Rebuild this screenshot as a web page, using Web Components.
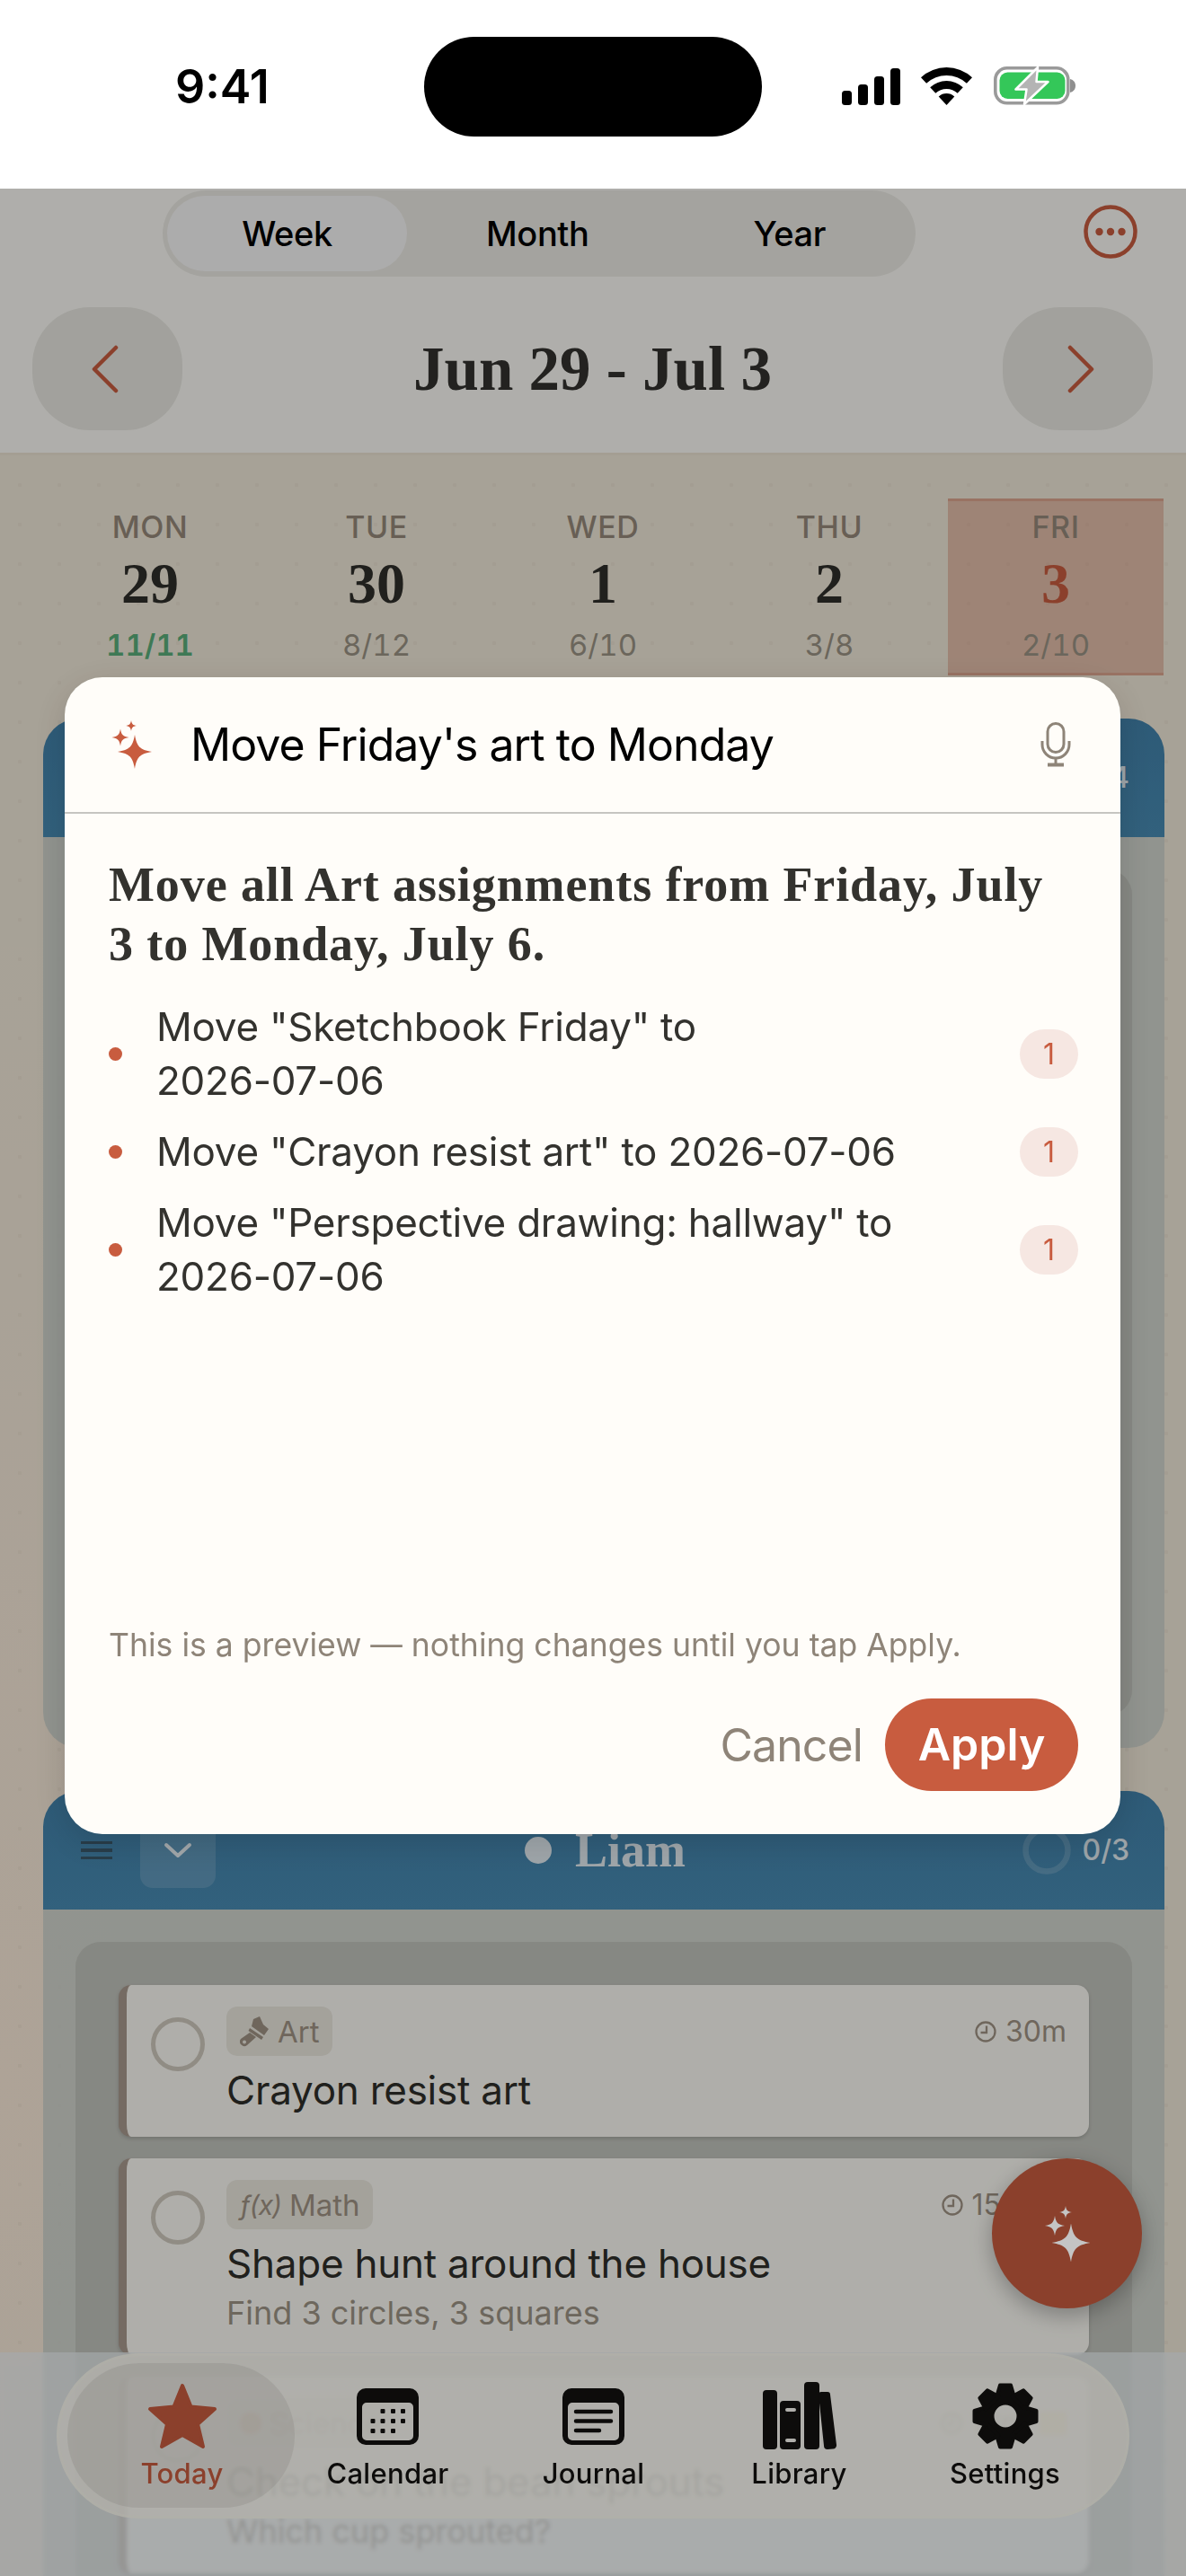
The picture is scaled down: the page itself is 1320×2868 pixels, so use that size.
<!DOCTYPE html>
<html lang="en">
<head>
<meta charset="utf-8">
<title>Week plan</title>
<style>
  html, body { margin: 0; padding: 0; background: #fff; }
  body { width: 1320px; height: 2868px; overflow: hidden; font-family: Inter, "Liberation Sans", sans-serif; }
  .nb { white-space: nowrap; }
  .fx { font-size: 30px; line-height: 40px; font-style: italic; letter-spacing: -1px; }
  .blob { display: block; width: 24px; height: 24px; border-radius: 50%; background: #e08a5a; }
</style>
</head>
<body>
<status-bar></status-bar>
<app-screen>
  <top-header></top-header>
  <week-strip>
    <day-col name="MON" date="29" done="11/11" complete></day-col>
    <day-col name="TUE" date="30" done="8/12"></day-col>
    <day-col name="WED" date="1" done="6/10"></day-col>
    <day-col name="THU" date="2" done="3/8"></day-col>
    <day-col name="FRI" date="3" done="2/10" today></day-col>
  </week-strip>
  <student-card count="4" body-height="1014"></student-card>
  <student-card name="Liam" count="0/3" body-height="800" show-head>
    <task-card category="Art" time="30m" title="Crayon resist art"><art-icon slot="icon"></art-icon></task-card>
    <task-card category="Math" time="15m" title="Shape hunt around the house" note="Find 3 circles, 3 squares" flag><span slot="icon" class="fx">ƒ(x)</span></task-card>
    <task-card category="Science" time="10m" title="Check on the bean sprouts" note="Which cup sprouted?" flag><span slot="icon" class="blob"></span></task-card>
  </student-card>
  <fab-button></fab-button>
  <tab-bar>
    <tab-item label="Today" icon="star" active></tab-item>
    <tab-item label="Calendar" icon="calendar"></tab-item>
    <tab-item label="Journal" icon="journal"></tab-item>
    <tab-item label="Library" icon="library"></tab-item>
    <tab-item label="Settings" icon="gear"></tab-item>
  </tab-bar>
  <dim-overlay></dim-overlay>
  <ai-dialog query="Move Friday's art to Monday" summary="Move all Art assignments from Friday, July 3 to Monday, July 6.">
    <plan-row>Move "Sketchbook Friday" to <span class="nb">2026-07-06</span></plan-row>
    <plan-row>Move "Crayon resist art" to <span class="nb">2026-07-06</span></plan-row>
    <plan-row>Move "Perspective drawing: hallway" to <span class="nb">2026-07-06</span></plan-row>
  </ai-dialog>
</app-screen>

<script>
const SERIF = '"Liberation Serif", serif'
const STAR = 'M0 -1C.12 -.3 .3 -.12 1 0C.3 .12 .12 .3 0 1C-.12 .3 -.3 .12 -1 0C-.3 -.12 -.12 -.3 0 -1Z'

function sparkles(color, big, small, tiny) {
    return `<g fill="${color}">
      <path d="${STAR}" transform="translate(${big[0]} ${big[1]}) scale(${big[2]})"/>
      <path d="${STAR}" transform="translate(${small[0]} ${small[1]}) scale(${small[2]})"/>
      <path d="${STAR}" transform="translate(${tiny[0]} ${tiny[1]}) scale(${tiny[2]})"/>
    </g>`
}

class StatusBar extends HTMLElement {
    constructor() {
        super()
        this.attachShadow({ mode: 'open' })
    }
    connectedCallback() {
        this.shadowRoot.innerHTML = `
      <style>
        :host { display: flex; height: 210px; background: #fff; color: #000; position: relative; }
        .time { width: 277px; margin-left: 195px; padding-top: 67px; font: 600 52px/60px Inter, sans-serif; }
        .island { width: 376px; height: 111px; margin-top: 41px; border-radius: 56px; background: #000; }
        .icons { display: flex; margin: 75px 0 0 89px; height: 42px; align-items: flex-end; }
        .bars { display: flex; gap: 7px; align-items: flex-end; height: 41px; }
        .bars i { display: block; width: 11px; background: #000; border-radius: 3.5px; }
        .wifi { margin-left: 23px; }
        .batt { margin-left: 24px; margin-bottom: -1px; }
      </style>
      <div class="time">9:41</div>
      <div class="island"></div>
      <div class="icons">
        <div class="bars"><i style="height:16px"></i><i style="height:23px"></i><i style="height:32px"></i><i style="height:41px"></i></div>
        <svg class="wifi" width="57" height="42" viewBox="0 0 57 42">
          <path d="M0 11.2A42 42 0 0 1 57 11.2L50.9 17.8A33 33 0 0 0 6.1 17.8Z"/>
          <path d="M10.2 22.2A27 27 0 0 1 46.8 22.2L40.7 28.8A18 18 0 0 0 16.3 28.8Z"/>
          <path d="M28.5 42L19.7 32.5A13 13 0 0 1 37.3 32.5Z"/>
        </svg>
        <svg class="batt" width="92" height="44" viewBox="0 0 92 44">
          <rect x="1.8" y="1.8" width="81" height="39" rx="13" fill="none" stroke="#9a9a9a" stroke-width="3.6"/>
          <path d="M85 14c4 1 6 4 6 7.5s-2 6.5-6 7.5z" fill="#8f8f8f"/>
          <rect x="6.5" y="6.5" width="73" height="29.5" rx="9" fill="#34c759"/>
          <path d="M49 1L24.5 25.5H36.5L34 42L60.5 17H47.5Z" fill="#b4b4b4" stroke="#fff" stroke-width="2.5" stroke-linejoin="round"/>
        </svg>
      </div>`
    }
}

class AppScreen extends HTMLElement {
    constructor() {
        super()
        this.attachShadow({ mode: 'open' })
    }
    connectedCallback() {
        this.shadowRoot.innerHTML = `
      <style>
        :host {
          display: block; position: relative; height: 2658px; overflow: hidden;
          background-color: #f0e8d8;
          background-image:
            radial-gradient(rgba(120,100,80,.05) 2px, transparent 2.5px),
            radial-gradient(700px 1300px at 0 2100px, #f9ead9, rgba(249,234,217,0));
          background-size: 44px 44px, 100% 100%;
        }
      </style>
      <slot></slot>`
    }
}

class TopHeader extends HTMLElement {
    constructor() {
        super()
        this.attachShadow({ mode: 'open' })
    }
    connectedCallback() {
        this.shadowRoot.innerHTML = `
      <style>
        :host { display: block; background: #fbfaf5; border-bottom: 3px solid #ebe3d3; padding: 2px 37px 25px 36px; }
        .top { display: flex; align-items: flex-start; height: 96px; padding-left: 145px; }
        .seg { width: 838px; height: 96px; box-sizing: border-box; padding: 6px 5px; border-radius: 48px; background: #ebeae4; display: grid; grid-template-columns: 267px 1fr 1fr; color: #000; font: 500 38px/84px Inter, sans-serif; letter-spacing: -.4px; text-align: center; }
        .seg .on { background: #f7f6f6; border-radius: 42px; }
        .seg span:nth-child(n+2) { padding-left: 10px; }
        .more { margin: 16px 0 0 187px; }
        .nav { display: flex; justify-content: space-between; align-items: center; margin-top: 34px; height: 137px; }
        button { width: 167px; height: 137px; border: 0; padding: 0; border-radius: 64px; background: #e8e7e1; display: flex; align-items: center; justify-content: center; }
        .prev svg { margin-right: 6px; }
        .next svg { margin-left: 6px; }
        h1 { margin: 0; font: 700 69px/80px ${SERIF}; color: #33322e; }
      </style>
      <div class="top">
        <div class="seg"><span class="on">Week</span><span>Month</span><span>Year</span></div>
        <svg class="more" width="60" height="60" viewBox="0 0 60 60">
          <circle cx="30" cy="30" r="27.5" fill="none" stroke="#c85c3f" stroke-width="4.5"/>
          <circle cx="17.5" cy="30" r="4.2" fill="#c85c3f"/><circle cx="30" cy="30" r="4.2" fill="#c85c3f"/><circle cx="42.5" cy="30" r="4.2" fill="#c85c3f"/>
        </svg>
      </div>
      <div class="nav">
        <button class="prev" aria-label="Previous"><svg width="32" height="54" viewBox="0 0 32 54"><path d="M28 3L4 27L28 51" fill="none" stroke="#c85c3f" stroke-width="4.5" stroke-linecap="round" stroke-linejoin="round"/></svg></button>
        <h1>Jun 29 - Jul 3</h1>
        <button class="next" aria-label="Next"><svg width="32" height="54" viewBox="0 0 32 54"><path d="M4 3L28 27L4 51" fill="none" stroke="#c85c3f" stroke-width="4.5" stroke-linecap="round" stroke-linejoin="round"/></svg></button>
      </div>`
    }
}

class WeekStrip extends HTMLElement {
    constructor() {
        super()
        this.attachShadow({ mode: 'open' })
    }
    connectedCallback() {
        this.shadowRoot.innerHTML = `
      <style>
        :host { display: grid; grid-template-columns: repeat(5, 240px); gap: 12px; padding: 48px 0 48px 47px; }
      </style>
      <slot></slot>`
    }
}

class DayCol extends HTMLElement {
    constructor() {
        super()
        this.attachShadow({ mode: 'open' })
    }
    connectedCallback() {
        this.shadowRoot.innerHTML = `
      <style>
        :host { display: flex; flex-direction: column; align-items: center; height: 197px; box-sizing: border-box; border: solid transparent; border-width: 3px 0; padding-top: 9px; text-align: center; }
        :host([today]) { background: rgba(200,92,63,.3); border-color: rgba(200,92,63,.25); }
        .name { font: 500 34px/40px Inter, sans-serif; letter-spacing: .6px; color: #95897a; }
        .date { margin-top: 8px; font: 700 64px/70px ${SERIF}; color: #2f2e2a; }
        :host([today]) .date { color: #c85c3f; }
        .done { margin-top: 13px; font: 400 33px/40px Inter, sans-serif; font-variant-numeric: tabular-nums; color: #9a9384; }
        :host([complete]) .done { color: #5aae7a; font-weight: 600; }
      </style>
      <div class="name">${this.getAttribute('name')}</div>
      <div class="date">${this.getAttribute('date')}</div>
      <div class="done">${this.getAttribute('done')}</div>`
    }
}

class StudentCard extends HTMLElement {
    constructor() {
        super()
        this.attachShadow({ mode: 'open' })
    }
    connectedCallback() {
        const showHead = this.hasAttribute('show-head')
        this.shadowRoot.innerHTML = `
      <style>
        :host { display: block; margin: 0 24px 48px 48px; border-radius: 40px; overflow: hidden; background: rgba(203,208,203,.88); }
        .head { height: 132px; display: flex; align-items: center; background: linear-gradient(#4282ab, #488bb3); color: rgba(255,255,255,.86); padding: 0 39px 0 42px; }
        .side { flex: 1; display: flex; align-items: center; }
        .side.end { justify-content: flex-end; gap: 12px; font: 500 32px/40px Inter, sans-serif; }
        .handle { display: grid; gap: 5px; width: 35px; margin-right: 31px; }
        .handle i { display: block; height: 3.5px; background: rgba(50,50,50,.55); }
        .toggle { width: 84px; height: 84px; border-radius: 14px; background: rgba(255,255,255,.14); display: flex; align-items: center; justify-content: center; }
        .who { display: flex; align-items: center; gap: 26px; font: 700 54px/60px ${SERIF}; }
        .who i { display: block; width: 30px; height: 30px; border-radius: 50%; background: currentColor; }
        .body { padding: 36px; height: ${this.getAttribute('body-height')}px; box-sizing: border-box; }
        .panel { height: 100%; box-sizing: border-box; padding: 48px; border-radius: 28px; background: rgba(190,192,184,.85); display: flex; flex-direction: column; gap: 24px; }
        :host([show-head]) .panel { height: 1200px; }
      </style>
      <div class="head">
        <div class="side">${showHead ? `
          <div class="handle"><i></i><i></i><i></i></div>
          <div class="toggle"><svg width="32" height="18" viewBox="0 0 32 18"><path d="M3 3L16 15L29 3" fill="none" stroke="currentColor" stroke-width="4" stroke-linecap="round" stroke-linejoin="round"/></svg></div>` : ''}
        </div>
        ${showHead ? `<div class="who"><i></i>${this.getAttribute('name')}</div>` : ''}
        <div class="side end">
          ${showHead ? `<svg width="54" height="54" viewBox="0 0 54 54"><circle cx="27" cy="27" r="23.5" fill="none" stroke="rgba(255,255,255,.16)" stroke-width="6.5"/></svg>` : ''}
          <span>${this.getAttribute('count')}</span>
        </div>
      </div>
      <div class="body"><div class="panel"><slot></slot></div></div>`
    }
}

class TaskCard extends HTMLElement {
    constructor() {
        super()
        this.attachShadow({ mode: 'open' })
    }
    connectedCallback() {
        const note = this.getAttribute('note')
        this.shadowRoot.innerHTML = `
      <style>
        :host { display: flex; box-sizing: border-box; background: #fbfaf4; border-left: 9px solid #a89a8e; border-radius: 14px; box-shadow: 0 2px 4px rgba(0,0,0,.16); padding: 24px 25px 24px 27px; }
        .check { flex: none; width: 60px; height: 60px; box-sizing: border-box; border-radius: 50%; border: 5px solid #cfc9be; margin: 12px 24px 0 0; }
        .main { flex: 1; min-width: 0; }
        .meta { display: flex; justify-content: space-between; align-items: center; height: 55px; }
        .chip { display: flex; align-items: center; gap: 9px; height: 55px; padding: 0 14px 0 15px; border-radius: 12px; background: #ebe8df; color: #9f9384; font: 400 33px/40px Inter, sans-serif; }
        .time { display: flex; align-items: center; gap: 10px; color: #9f9384; font: 400 32px/40px Inter, sans-serif; }
        .flag { width: 30px; height: 26px; margin-left: 5px; border-radius: 3px; background: #f6d98c; }
        .title { margin-top: 10px; font: 400 44px/56px Inter, sans-serif; letter-spacing: -.25px; color: #2f2e2a; }
        .note { margin-top: 4px; font: 400 36px/46px Inter, sans-serif; color: #9d9486; }
      </style>
      <div class="check"></div>
      <div class="main">
        <div class="meta">
          <div class="chip"><slot name="icon"></slot><span>${this.getAttribute('category')}</span></div>
          <div class="time">
            <svg width="24" height="26" viewBox="0 0 24 26" fill="none" stroke="currentColor" stroke-width="2.3"><circle cx="12" cy="13" r="10.5"/><path d="M13 6.5V14H6.5"/></svg>
            <span>${this.getAttribute('time')}</span>
            ${this.hasAttribute('flag') ? '<div class="flag"></div>' : ''}
          </div>
        </div>
        <div class="title">${this.getAttribute('title')}</div>
        ${note ? `<div class="note">${note}</div>` : ''}
      </div>`
    }
}

class ArtIcon extends HTMLElement {
    constructor() {
        super()
        this.attachShadow({ mode: 'open' })
    }
    connectedCallback() {
        this.shadowRoot.innerHTML = `
      <style>:host { display: block; width: 33px; height: 34px; }</style>
      <svg width="33" height="34" viewBox="0 0 33 34" fill="#9f9384">
        <path d="M15 3L22 0L26 9L32 14L27 21L13 11Z"/>
        <path d="M11 13L26 23L24 26L9.5 16Z"/>
        <path fill-rule="evenodd" d="M11 18L18 23L8 32A5 5 0 0 1 1 25ZM5 26.5A2 2 0 1 0 5 30.5A2 2 0 1 0 5 26.5Z"/>
      </svg>`
    }
}

class FabButton extends HTMLElement {
    constructor() {
        super()
        this.attachShadow({ mode: 'open' })
    }
    connectedCallback() {
        // the glyph sits above the dim layer, it reads lighter than the dimmed button
        this.shadowRoot.innerHTML = `
      <style>
        :host { position: absolute; left: 1104px; top: 2193px; width: 167px; height: 167px; border-radius: 50%; background: #c85c3f; box-shadow: 0 8px 24px rgba(0,0,0,.28); }
        svg { position: relative; z-index: 2; display: block; }
      </style>
      <svg width="167" height="167" viewBox="0 0 167 167">${sparkles('#c4c4c4', [88, 94, 21.5], [70, 75, 11], [82, 60, 7])}</svg>`
    }
}

class TabBar extends HTMLElement {
    constructor() {
        super()
        this.attachShadow({ mode: 'open' })
    }
    connectedCallback() {
        this.shadowRoot.innerHTML = `
      <style>
        :host { position: absolute; left: 0; right: 0; bottom: 0; height: 249px; background: rgba(238,243,246,.68); -webkit-backdrop-filter: blur(2px); backdrop-filter: blur(2px); }
        .pill { position: absolute; left: 63px; top: 1px; width: 1194px; height: 184px; box-sizing: border-box; border-radius: 92px; background: rgba(255,252,244,.78); border: 3px solid rgba(255,253,240,.35); padding: 27px 0 0 22px; display: grid; grid-template-columns: repeat(5, 229px); align-items: start; }
      </style>
      <div class="pill"><slot></slot></div>`
    }
}

const TAB_ICONS = {
    star: `<svg width="78" height="74" viewBox="0 0 78 74"><path d="M39 3L48.5 26.5L75 29L56 46L62 71L39 58L16 71L22 46L3 29L29.5 26.5Z" fill="#c85c3f" stroke="#c85c3f" stroke-width="4" stroke-linejoin="round"/></svg>`,
    calendar: `<svg width="69" height="63" viewBox="0 0 69 63"><path fill="#131210" fill-rule="evenodd" d="M10 0H59A10 10 0 0 1 69 10V53A10 10 0 0 1 59 63H10A10 10 0 0 1 0 53V10A10 10 0 0 1 10 0ZM11 16A5 5 0 0 0 6 21V53A5 5 0 0 0 11 58H58A5 5 0 0 0 63 53V21A5 5 0 0 0 58 16Z"/><g fill="#131210"><rect x="26.5" y="23" width="5" height="5" rx="1"/><rect x="38" y="23" width="5" height="5" rx="1"/><rect x="49" y="23" width="5" height="5" rx="1"/><rect x="15.5" y="34" width="5" height="5" rx="1"/><rect x="26.5" y="34" width="5" height="5" rx="1"/><rect x="38" y="34" width="5" height="5" rx="1"/><rect x="49" y="34" width="5" height="5" rx="1"/><rect x="15.5" y="45" width="5" height="5" rx="1"/><rect x="26.5" y="45" width="5" height="5" rx="1"/><rect x="38" y="45" width="5" height="5" rx="1"/></g></svg>`,
    journal: `<svg width="69" height="63" viewBox="0 0 69 63"><path fill="#131210" fill-rule="evenodd" d="M10 0H59A10 10 0 0 1 69 10V53A10 10 0 0 1 59 63H10A10 10 0 0 1 0 53V10A10 10 0 0 1 10 0ZM11 16A5 5 0 0 0 6 21V53A5 5 0 0 0 11 58H58A5 5 0 0 0 63 53V21A5 5 0 0 0 58 16Z"/><path d="M15 26H54M15 36.5H54M15 47H41" stroke="#131210" stroke-width="4.5" stroke-linecap="round"/></svg>`,
    library: `<svg width="82" height="76" viewBox="0 0 82 76"><g fill="#131210"><rect x="0" y="9" width="16" height="66" rx="4"/><path fill-rule="evenodd" d="M23 21H38A4 4 0 0 1 42 25V71A4 4 0 0 1 38 75H23A4 4 0 0 1 19 71V25A4 4 0 0 1 23 21ZM27 29A2 2 0 0 0 27 33H35A2 2 0 0 0 35 29ZM27 63A2 2 0 0 0 27 67H35A2 2 0 0 0 35 63Z"/><rect x="46" y="0" width="17" height="75" rx="4"/><path d="M62 14A3 3 0 0 1 65 11H72A3 3 0 0 1 75 14L82 70A4 4 0 0 1 78 74.5L72 75A4 4 0 0 1 68 71Z"/></g></svg>`,
    gear: `<svg width="74" height="74" viewBox="-37 -37 74 74"><circle r="19" fill="none" stroke="#131210" stroke-width="13"/><g fill="#131210" stroke="#131210" stroke-width="4" stroke-linejoin="round"><path d="M-6 -34.5H6L10 -21H-10Z"/><path d="M-6 -34.5H6L10 -21H-10Z" transform="rotate(45)"/><path d="M-6 -34.5H6L10 -21H-10Z" transform="rotate(90)"/><path d="M-6 -34.5H6L10 -21H-10Z" transform="rotate(135)"/><path d="M-6 -34.5H6L10 -21H-10Z" transform="rotate(180)"/><path d="M-6 -34.5H6L10 -21H-10Z" transform="rotate(225)"/><path d="M-6 -34.5H6L10 -21H-10Z" transform="rotate(270)"/><path d="M-6 -34.5H6L10 -21H-10Z" transform="rotate(315)"/></g></svg>`
}

class TabItem extends HTMLElement {
    constructor() {
        super()
        this.attachShadow({ mode: 'open' })
    }
    connectedCallback() {
        this.shadowRoot.innerHTML = `
      <style>
        :host { display: flex; flex-direction: column; align-items: center; position: relative; color: #131210; }
        :host([active]) { color: #c85c3f; }
        :host([active])::before { content: ""; position: absolute; left: -13px; top: -19px; width: 253px; height: 161px; border-radius: 80px; background: rgba(120,115,105,.13); }
        .icon { position: relative; height: 80px; display: flex; align-items: center; justify-content: center; }
        .label { position: relative; margin-top: 4px; font: 500 31px/40px Inter, sans-serif; letter-spacing: .3px; }
      </style>
      <div class="icon">${TAB_ICONS[this.getAttribute('icon')]}</div>
      <div class="label">${this.getAttribute('label')}</div>`
    }
}

class DimOverlay extends HTMLElement {
    constructor() {
        super()
        this.attachShadow({ mode: 'open' })
    }
    connectedCallback() {
        this.shadowRoot.innerHTML = `<style>:host { position: absolute; inset: 0; background: rgba(0,0,0,.3); }</style>`
    }
}

class AiDialog extends HTMLElement {
    constructor() {
        super()
        this.attachShadow({ mode: 'open' })
    }
    connectedCallback() {
        this.shadowRoot.innerHTML = `
      <style>
        :host { position: absolute; left: 72px; top: 544px; width: 1175px; height: 1288px; border-radius: 42px; background: #fffdf9; box-shadow: 0 10px 40px rgba(0,0,0,.14); display: flex; flex-direction: column; }
        .ask { flex: none; height: 150px; display: flex; align-items: center; border-bottom: 2px solid #c6c5c1; padding: 0 55px 0 50px; }
        .ask svg.spark { flex: none; margin-right: 40px; }
        .q { flex: 1; font: 400 50px/60px Inter, sans-serif; letter-spacing: -.95px; color: #000; }
        .body { flex: 1; display: flex; flex-direction: column; padding: 46px 47px 48px 49px; }
        h2 { margin: 0 0 29px; width: 1065px; font: 700 54px/66px ${SERIF}; letter-spacing: .9px; color: #33322e; }
        .rows { display: flex; flex-direction: column; gap: 19px; }
        .note { margin-top: auto; font: 400 35.6px/44px Inter, sans-serif; color: #8e8478; }
        .actions { margin-top: 37px; display: flex; justify-content: flex-end; align-items: center; gap: 25px; }
        .cancel { font: 400 50px/60px Inter, sans-serif; letter-spacing: -.9px; color: #8e8478; }
        .apply { width: 215px; height: 103px; border-radius: 52px; background: #c85c3f; color: #fff; font: 600 50px/103px Inter, sans-serif; text-align: center; }
      </style>
      <div class="ask">
        <svg class="spark" width="50" height="60" viewBox="0 0 50 60">${sparkles('#c85c3f', [28, 38, 19], [12, 22, 9.5], [24, 9, 6])}</svg>
        <div class="q">${this.getAttribute('query')}</div>
        <svg width="34" height="50" viewBox="0 0 34 50" fill="none" stroke="#8e8478" stroke-width="3">
          <rect x="8" y="1.5" width="18" height="32" rx="9"/>
          <path d="M2 21V25A15 15 0 0 0 32 25V21"/>
          <path d="M17 40V47"/><path d="M8 47.5H26" stroke-width="4"/>
        </svg>
      </div>
      <div class="body">
        <h2>${this.getAttribute('summary')}</h2>
        <div class="rows"><slot></slot></div>
        <div class="note">This is a preview — nothing changes until you tap Apply.</div>
        <div class="actions"><span class="cancel">Cancel</span><span class="apply">Apply</span></div>
      </div>`
    }
}

class PlanRow extends HTMLElement {
    constructor() {
        super()
        this.attachShadow({ mode: 'open' })
    }
    connectedCallback() {
        this.shadowRoot.innerHTML = `
      <style>
        :host { display: flex; align-items: center; }
        .dot { flex: none; width: 15px; height: 15px; border-radius: 50%; background: #c85c3f; margin-right: 38px; }
        .text { width: 835px; font: 400 44px/60px Inter, sans-serif; letter-spacing: -.25px; color: #33322e; }
        .badge { flex: none; margin-left: auto; width: 65px; height: 55px; border-radius: 28px; background: #f6e7e2; color: #c85c3f; font: 400 32px/55px Inter, sans-serif; text-align: center; }
      </style>
      <span class="dot"></span>
      <div class="text"><slot></slot></div>
      <span class="badge">1</span>`
    }
}

customElements.define('status-bar', StatusBar)
customElements.define('app-screen', AppScreen)
customElements.define('top-header', TopHeader)
customElements.define('week-strip', WeekStrip)
customElements.define('day-col', DayCol)
customElements.define('student-card', StudentCard)
customElements.define('task-card', TaskCard)
customElements.define('art-icon', ArtIcon)
customElements.define('fab-button', FabButton)
customElements.define('tab-bar', TabBar)
customElements.define('tab-item', TabItem)
customElements.define('dim-overlay', DimOverlay)
customElements.define('ai-dialog', AiDialog)
customElements.define('plan-row', PlanRow)
</script>
</body>
</html>
